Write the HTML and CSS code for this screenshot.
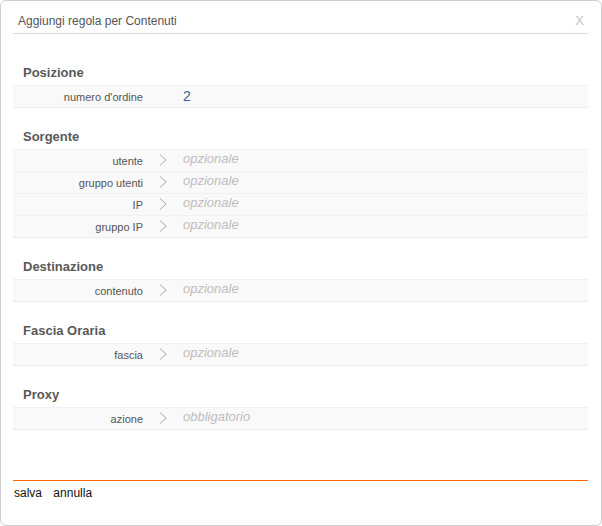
FILE: index.html
```html
<!DOCTYPE html>
<html lang="it">
<head>
    <meta charset="UTF-8">
    <title>Aggiungi regola per Contenuti</title>
    <link rel="stylesheet" href="styles.css">
</head>
<body>
    <div class="dialog">
        <!-- Titolo -->
        <div class="dialog-title">
            <span>Aggiungi regola per Contenuti</span>
            <span class="close">X</span>
        </div>

        <div class="dialog-body">
            <div class="group">
                <div class="group-title">Posizione</div>
                <div class="rows">
                    <div class="row">
                        <div class="label">numero d'ordine</div>
                        <div class="arrow"></div>
                        <div class="value number">2</div>
                    </div>
                </div>
            </div>

            <div class="group">
                <div class="group-title">Sorgente</div>
                <div class="rows">
                    <div class="row">
                        <div class="label">utente</div>
                        <div class="arrow"><svg width="8" height="12" viewBox="0 0 8 12"><polyline points="1,0.5 7,6 1,11.5" /></svg></div>
                        <div class="value">opzionale</div>
                    </div>
                    <div class="row">
                        <div class="label">gruppo utenti</div>
                        <div class="arrow"><svg width="8" height="12" viewBox="0 0 8 12"><polyline points="1,0.5 7,6 1,11.5" /></svg></div>
                        <div class="value">opzionale</div>
                    </div>
                    <div class="row">
                        <div class="label">IP</div>
                        <div class="arrow"><svg width="8" height="12" viewBox="0 0 8 12"><polyline points="1,0.5 7,6 1,11.5" /></svg></div>
                        <div class="value">opzionale</div>
                    </div>
                    <div class="row">
                        <div class="label">gruppo IP</div>
                        <div class="arrow"><svg width="8" height="12" viewBox="0 0 8 12"><polyline points="1,0.5 7,6 1,11.5" /></svg></div>
                        <div class="value">opzionale</div>
                    </div>
                </div>
            </div>

            <div class="group">
                <div class="group-title">Destinazione</div>
                <div class="rows">
                    <div class="row">
                        <div class="label">contenuto</div>
                        <div class="arrow"><svg width="8" height="12" viewBox="0 0 8 12"><polyline points="1,0.5 7,6 1,11.5" /></svg></div>
                        <div class="value">opzionale</div>
                    </div>
                </div>
            </div>

            <div class="group">
                <div class="group-title">Fascia Oraria</div>
                <div class="rows">
                    <div class="row">
                        <div class="label">fascia</div>
                        <div class="arrow"><svg width="8" height="12" viewBox="0 0 8 12"><polyline points="1,0.5 7,6 1,11.5" /></svg></div>
                        <div class="value">opzionale</div>
                    </div>
                </div>
            </div>

            <div class="group">
                <div class="group-title">Proxy</div>
                <div class="rows">
                    <div class="row">
                        <div class="label">azione</div>
                        <div class="arrow"><svg width="8" height="12" viewBox="0 0 8 12"><polyline points="1,0.5 7,6 1,11.5" /></svg></div>
                        <div class="value">obbligatorio</div>
                    </div>
                </div>
            </div>
        </div>

        <!-- Pulsanti -->
        <div class="dialog-footer">
            <a class="action">salva</a>
            <a class="action">annulla</a>
        </div>
    </div>
</body>
</html>
```

FILE: styles.css
```css
* {
    margin: 0;
    padding: 0;
    box-sizing: border-box;
}

body {
    font-family: "Liberation Sans", Arial, sans-serif;
    background: #fff;
}

.dialog {
    width: 602px;
    height: 526px;
    border: 1px solid #cfcfcf;
    border-radius: 6px;
    padding: 0 13px 0 12px;
    display: flex;
    flex-direction: column;
    background: #fff;
}

/* Titolo */
.dialog-title {
    display: flex;
    justify-content: space-between;
    padding: 12px 4px 4px 5px;
    font-size: 12px;
    line-height: 16px;
    color: #555;
    border-bottom: 1px solid #dcdcdc;
}

.close {
    color: #c4c4c4;
    font-size: 13px;
}

.dialog-body {
    flex: 1;
    padding-top: 10px;
}

.group {
    margin-top: 15px;
}

.group-title {
    padding: 1px 0 0 10px;
    font-size: 13px;
    font-weight: bold;
    line-height: 25px;
    color: #595959;
}

.rows {
    border-bottom: 1px solid #ececec;
}

.row {
    display: flex;
    height: 22px;
    border-top: 1px solid #f1f1f1;
    background: #f9f9f9;
}

.label {
    width: 130px;
    text-align: right;
    font-size: 11px;
    line-height: 14px;
    padding-top: 4px;
    color: #555;
}

.arrow {
    width: 40px;
    padding: 4px 0 0 16px;
}

.arrow svg {
    display: block;
}

.arrow polyline {
    fill: none;
    stroke: #a8a8a8;
    stroke-width: 1;
}

.value {
    font-size: 13px;
    font-style: italic;
    line-height: 16px;
    padding-top: 1px;
    color: #bdbdbd;
}

.value.number {
    font-style: normal;
    font-size: 14px;
    padding-top: 2px;
    color: #3b5b9c;
}

/* Pulsanti */
.dialog-footer {
    border-top: 1px solid #ff6600;
    padding: 4px 0 24px 1px;
    font-size: 12px;
    line-height: 16px;
}

.action {
    color: #111;
    margin-right: 8px;
    cursor: pointer;
}
```
